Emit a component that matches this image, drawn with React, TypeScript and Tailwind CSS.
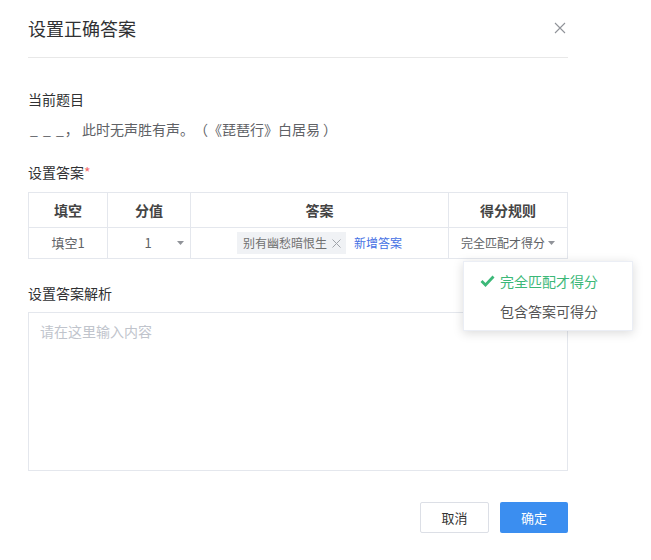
import React from "react";

const font = { fontFamily: '"Noto Sans CJK SC", "Noto Sans", sans-serif' };

export default function App() {
  return (
    <div className="relative w-[651px] h-[560px] bg-white text-[#333]" style={font}>
      <div className="pl-[28px] w-[568px]">
        {/* header */}
        <div className="h-[58px] border-b border-[#e8e8e8] flex items-start justify-between pt-[16px]">
          <div className="text-[18px] leading-[24px] text-[#303133]">设置正确答案</div>
          <svg width="12" height="12" viewBox="0 0 12 12" className="mt-[6px] mr-[2px]">
            <path d="M1 1L11 11M11 1L1 11" stroke="#909399" strokeWidth="1.1" />
          </svg>
        </div>

        <div className="mt-[31px] text-[14px] leading-[20px] text-[#303133]">当前题目</div>
        <div className="mt-[10px] text-[14px] leading-[20px] text-[#606266] whitespace-pre [text-spacing-trim:space-all]">
          <span className="tracking-[1px] pl-[2px]">{"_ _ _"}</span>
          {"， 此时无声胜有声。（《琵琶行》白居易 ）"}
        </div>

        <div className="mt-[23px] text-[14px] leading-[20px] text-[#303133]">
          设置答案<span className="text-[#f56c6c]">*</span>
        </div>

        {/* table */}
        <div className="mt-[10px] border-l border-t border-[#e4e7ed] grid grid-cols-[79px_83px_258px_119px]">
          <div className="h-[35px] border-r border-b border-[#e4e7ed] flex items-center justify-center text-[14px] font-bold text-[#444]">填空</div>
          <div className="h-[35px] border-r border-b border-[#e4e7ed] flex items-center justify-center text-[14px] font-bold text-[#444]">分值</div>
          <div className="h-[35px] border-r border-b border-[#e4e7ed] flex items-center justify-center text-[14px] font-bold text-[#444]">答案</div>
          <div className="h-[35px] border-r border-b border-[#e4e7ed] flex items-center justify-center text-[14px] font-bold text-[#444]">得分规则</div>

          <div className="h-[31px] border-r border-b border-[#e4e7ed] flex items-center justify-center text-[13px] text-[#606266]">填空1</div>
          <div className="relative h-[31px] border-r border-b border-[#e4e7ed] flex items-center justify-center text-[13px] text-[#606266]">
            <span className="mr-[2px]">1</span>
            <svg width="7" height="4" viewBox="0 0 7 4" className="absolute right-[6px] top-[13px]">
              <path d="M0 0H7L3.5 4Z" fill="#909399" />
            </svg>
          </div>
          <div className="h-[31px] border-r border-b border-[#e4e7ed] flex items-center justify-center">
            <span className="h-[22px] bg-[#f0f2f5] flex items-center pl-[6px] pr-[5px] text-[12px] text-[#707070]">
              别有幽愁暗恨生
              <svg width="9" height="9" viewBox="0 0 9 9" className="ml-[5px]">
                <path d="M0.5 0.5L8.5 8.5M8.5 0.5L0.5 8.5" stroke="#a0a4aa" strokeWidth="1" />
              </svg>
            </span>
            <span className="ml-[8px] text-[12px] text-[#4470e4]">新增答案</span>
          </div>
          <div className="h-[31px] border-r border-b border-[#e4e7ed] flex items-center justify-center text-[12px] text-[#606266]">
            完全匹配才得分
            <svg width="7" height="4" viewBox="0 0 7 4" className="ml-[3px]">
              <path d="M0 0H7L3.5 4Z" fill="#909399" />
            </svg>
          </div>
        </div>

        <div className="mt-[24px] text-[14px] leading-[20px] text-[#303133]">设置答案解析</div>
        <div className="mt-[9px] h-[159px] border border-[#e4e7ed] px-[11px] py-[8px] text-[14px] leading-[20px] text-[#c0c4cc]">
          请在这里输入内容
        </div>

        <div className="mt-[31px] flex justify-end gap-[11px]">
          <button className="w-[69px] h-[31px] border border-[#dcdfe6] rounded-[2px] bg-white text-[13px] text-[#333]">取消</button>
          <button className="w-[68px] h-[31px] rounded-[2px] bg-[#3b8ef0] text-[13px] text-white">确定</button>
        </div>
      </div>

      {/* dropdown */}
      <div className="absolute left-[463px] top-[261px] w-[170px] bg-white border border-[#ebeef5] shadow-[0_2px_10px_rgba(0,0,0,0.15)] py-[4px]">
        <div className="h-[30px] flex items-center pl-[16px] text-[14px] text-[#3cb878]">
          <svg width="15" height="12" viewBox="0 0 15 12" className="mr-[5px]">
            <path d="M1.5 6L5.5 10L13.5 1.5" stroke="#3cb878" strokeWidth="2.8" fill="none" />
          </svg>
          完全匹配才得分
        </div>
        <div className="h-[30px] flex items-center pl-[36px] text-[14px] text-[#555]">包含答案可得分</div>
      </div>
    </div>
  );
}
